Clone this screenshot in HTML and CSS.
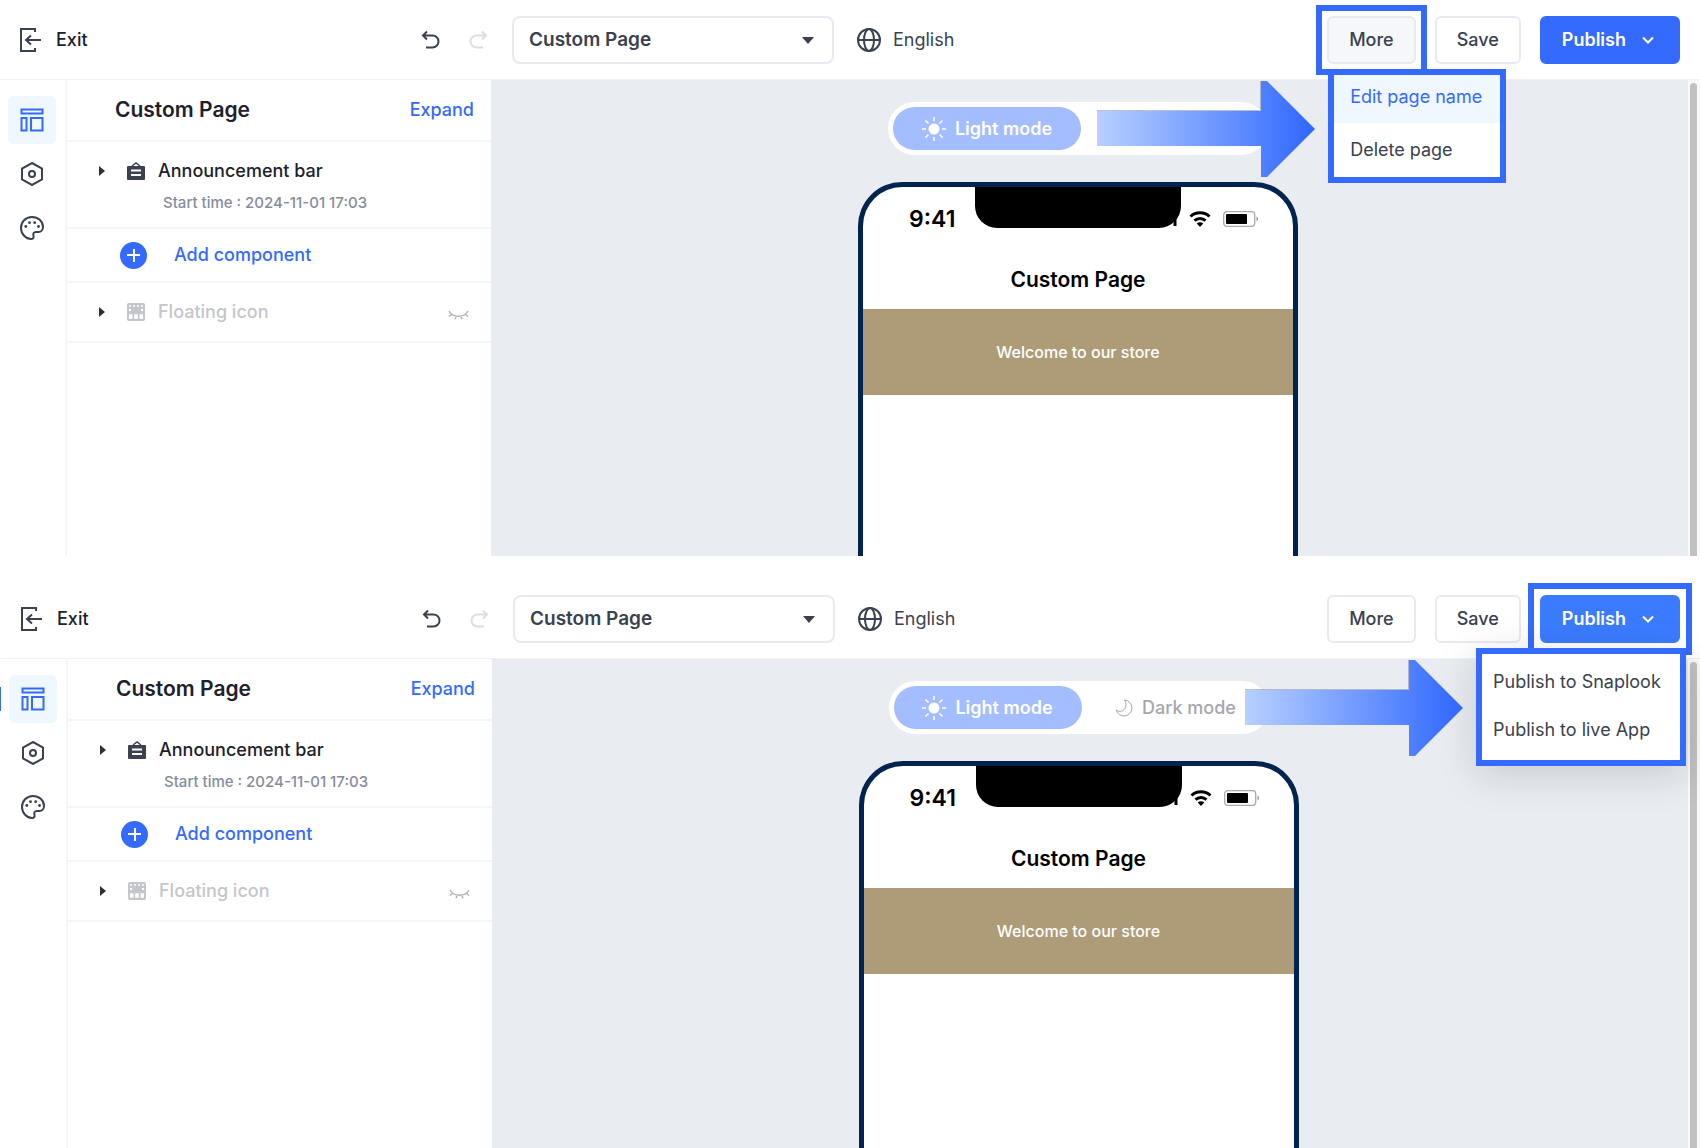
FILE: index.html
```html
<!DOCTYPE html>
<html lang="en">
<head>
    <meta charset="UTF-8">
    <meta name="viewport" content="width=device-width, initial-scale=1.0">
    <title>Custom Page</title>
    <link rel="stylesheet" href="styles.css">
</head>
<body>
    <!-- shared icons -->
    <svg class="sprite" aria-hidden="true">
        <linearGradient id="arrowFill" x1="0" x2="1" y1="0" y2="0">
            <stop offset="0" stop-color="#b8d0ff"/>
            <stop offset="1" stop-color="#2f67ff"/>
        </linearGradient>
        <symbol id="i-exit" viewBox="0 0 22 24"><path d="M15 4V1H1v22h14v-3M21 12H6M11 7.500l-5 4.500 5 4.500"/></symbol>
        <symbol id="i-undo" viewBox="0 0 20 20"><path d="M6 1.500L2 5.500l4 4M2 5.500h9.500a6 6 0 0 1 0 12H5"/></symbol>
        <symbol id="i-globe" viewBox="0 0 24 24"><circle cx="12" cy="12" r="11"/><ellipse cx="12" cy="12" rx="5" ry="11"/><path d="M1 12h22"/></symbol>
        <symbol id="i-down" viewBox="0 0 12 8"><path d="M1 1.500l5 5 5-5"/></symbol>
        <symbol id="i-layout" viewBox="0 0 24 24"><path d="M1.500 1.500h21v4h-21zM1.500 10h5v12.500h-5zM11 10h11.500v12.500H11z"/></symbol>
        <symbol id="i-hex" viewBox="0 0 24 24"><path d="M12 1l10 5.500v11L12 23 2 17.500v-11z"/><circle cx="12" cy="12" r="3"/></symbol>
        <symbol id="i-palette" viewBox="0 0 24 24"><path d="M12 1C5.500 1 1 6 1 12s5 11 10 11c2 0 3-1.500 2.500-3-.8-2.500.3-4 2.500-4h2.500c2.500 0 4.500-2 4.500-5C23 5 18 1 12 1z"/><g fill="currentColor" stroke="none"><circle cx="5.800" cy="10.500" r="1.400"/><circle cx="9.500" cy="6.700" r="1.400"/><circle cx="14.700" cy="6.700" r="1.400"/><circle cx="18.500" cy="10.500" r="1.400"/></g></symbol>
        <symbol id="i-caret" viewBox="0 0 6 10"><path d="M0 0l6 5-6 5z" fill="currentColor" stroke="none"/></symbol>
        <symbol id="i-board" viewBox="0 0 18 18"><path d="M5 4l4-3 4 3" stroke-width="1.500"/><rect y="4" width="18" height="14" rx="1" fill="currentColor" stroke="none"/><path d="M4 8.500h10M4 13h10" stroke="#fff"/></symbol>
        <symbol id="i-grid" viewBox="0 0 18 18"><rect width="18" height="18" rx="2" fill="currentColor" stroke="none"/><path d="M2 3h14" stroke="#fff" stroke-width="1.500" stroke-dasharray="2 2"/><path d="M2 7h2M14 7h2" stroke="#fff" stroke-width="2"/><path d="M2 13.500h3.500M7.200 13.500h3.600M12.500 13.500H16" stroke="#fff" stroke-width="4.500"/></symbol>
        <symbol id="i-eye" viewBox="0 0 21 10"><path d="M1 1c4 7 15 7 19 0M4 4L1 6.500M8.300 6L7 9.200M12.700 6L14 9.200M17 4l3 2.500" stroke-width="1.500"/></symbol>
        <symbol id="i-sun" viewBox="0 0 24 24"><circle cx="12" cy="12" r="5.500" fill="currentColor" stroke="none"/><path d="M12 0v4M12 20v4M0 12h4M20 12h4M3.500 3.500l3 3M17.500 17.500l3 3M3.500 20.500l3-3M17.500 6.500l3-3" stroke-width="1.500"/></symbol>
        <symbol id="i-moon" viewBox="0 0 18 18"><path d="M9.500 1A8 8 0 1 1 1.200 11 5.500 5.500 0 0 0 9.500 10c2-2.500 2-6 0-9z" stroke-width="1"/></symbol>
        <symbol id="i-signal" viewBox="0 0 20 16"><path d="M0 11h3v3H0zM5 8h3v6H5zM10 4h3v9h-3zM16.500 1h3v14h-3z" fill="currentColor" stroke="none"/></symbol>
        <symbol id="i-wifi" viewBox="0 0 22 16"><path d="M1.500 5.500a14 14 0 0 1 19 0M5.500 9.700a8 8 0 0 1 11 0" stroke-width="3"/><path d="M11 16l-3.300-3.400a4.600 4.600 0 0 1 6.600 0z" fill="currentColor" stroke="none"/></symbol>
        <symbol id="i-battery" viewBox="0 0 36 16"><rect x=".7" y=".7" width="31" height="14.600" rx="3" stroke="#aaa" stroke-width="1.300"/><rect x="3" y="3" width="21" height="10" rx="1" fill="currentColor" stroke="none"/><path d="M33.500 5.500c2 .7 2 4.300 0 5z" fill="#999" stroke="none"/></symbol>
        <symbol id="i-arrow" viewBox="0 0 218 96"><path d="M0 30h164V0h6l48 48-48 48h-6V65H0z" fill="url(#arrowFill)" stroke="none"/><path d="M0 29.500h163.500V0" stroke="#8b95ad" stroke-opacity=".6" stroke-width="1"/></symbol>
    </svg>

    <section class="screen">
        <header class="topbar">
            <button class="plain exit"><svg class="icon exit-icon"><use href="#i-exit"/></svg>Exit</button>
            <div class="history">
                <button class="plain" aria-label="Undo"><svg class="icon"><use href="#i-undo"/></svg></button>
                <button class="plain redo" aria-label="Redo" disabled><svg class="icon flip"><use href="#i-undo"/></svg></button>
            </div>
            <div class="page-select">
                <select aria-label="Page"><option>Custom Page</option></select>
            </div>
            <button class="plain lang"><svg class="icon globe"><use href="#i-globe"/></svg>English</button>
            <div class="actions">
                <div class="action marked marked-more">
                    <button class="btn btn-hover">More</button>
                    <div class="menu menu-more">
                        <button class="menu-item selected">Edit page name</button>
                        <button class="menu-item">Delete page</button>
                        <svg class="icon arrow"><use href="#i-arrow"/></svg>
                    </div>
                </div>
                <button class="btn">Save</button>
                <div class="action">
                    <button class="btn btn-primary">Publish<svg class="icon down"><use href="#i-down"/></svg></button>
                </div>
            </div>
        </header>
        <div class="workspace">
            <nav class="rail">
                <button class="plain rail-item active" aria-label="Layout"><svg class="icon"><use href="#i-layout"/></svg></button>
                <button class="plain rail-item" aria-label="Settings"><svg class="icon"><use href="#i-hex"/></svg></button>
                <button class="plain rail-item" aria-label="Theme"><svg class="icon"><use href="#i-palette"/></svg></button>
            </nav>
            <aside class="panel">
                <div class="panel-head">
                    <h2>Custom Page</h2>
                    <button class="plain link">Expand</button>
                </div>
                <div class="component">
                    <div class="component-row">
                        <svg class="icon caret"><use href="#i-caret"/></svg>
                        <svg class="icon kind"><use href="#i-board"/></svg>
                        <span>Announcement bar</span>
                    </div>
                    <p class="start-time">Start time : 2024-11-01 17:03</p>
                </div>
                <button class="plain link add"><span class="plus"></span>Add component</button>
                <div class="component component-row hidden-item">
                    <svg class="icon caret"><use href="#i-caret"/></svg>
                    <svg class="icon kind"><use href="#i-grid"/></svg>
                    <span>Floating icon</span>
                    <svg class="icon eye"><use href="#i-eye"/></svg>
                </div>
            </aside>
            <main class="canvas">
                <div class="modes">
                    <button class="mode mode-on"><svg class="icon sun"><use href="#i-sun"/></svg>Light mode</button>
                </div>
                <div class="phone">
                    <div class="notch"></div>
                    <div class="status">
                        <span class="clock">9:41</span>
                        <svg class="icon signal"><use href="#i-signal"/></svg>
                        <svg class="icon wifi"><use href="#i-wifi"/></svg>
                        <svg class="icon battery"><use href="#i-battery"/></svg>
                    </div>
                    <h3>Custom Page</h3>
                    <p class="announcement">Welcome to our store</p>
                </div>
            </main>
            <div class="scrollbar"></div>
        </div>
    </section>

    <section class="screen">
        <header class="topbar">
            <button class="plain exit"><svg class="icon exit-icon"><use href="#i-exit"/></svg>Exit</button>
            <div class="history">
                <button class="plain" aria-label="Undo"><svg class="icon"><use href="#i-undo"/></svg></button>
                <button class="plain redo" aria-label="Redo" disabled><svg class="icon flip"><use href="#i-undo"/></svg></button>
            </div>
            <div class="page-select">
                <select aria-label="Page"><option>Custom Page</option></select>
            </div>
            <button class="plain lang"><svg class="icon globe"><use href="#i-globe"/></svg>English</button>
            <div class="actions">
                <div class="action">
                    <button class="btn">More</button>
                </div>
                <button class="btn">Save</button>
                <div class="action marked">
                    <button class="btn btn-primary btn-open">Publish<svg class="icon down"><use href="#i-down"/></svg></button>
                    <div class="menu menu-publish">
                        <button class="menu-item">Publish to Snaplook</button>
                        <button class="menu-item">Publish to live App</button>
                        <svg class="icon arrow"><use href="#i-arrow"/></svg>
                    </div>
                </div>
            </div>
        </header>
        <div class="workspace">
            <nav class="rail">
                <button class="plain rail-item active" aria-label="Layout"><svg class="icon"><use href="#i-layout"/></svg></button>
                <button class="plain rail-item" aria-label="Settings"><svg class="icon"><use href="#i-hex"/></svg></button>
                <button class="plain rail-item" aria-label="Theme"><svg class="icon"><use href="#i-palette"/></svg></button>
            </nav>
            <aside class="panel">
                <div class="panel-head">
                    <h2>Custom Page</h2>
                    <button class="plain link">Expand</button>
                </div>
                <div class="component">
                    <div class="component-row">
                        <svg class="icon caret"><use href="#i-caret"/></svg>
                        <svg class="icon kind"><use href="#i-board"/></svg>
                        <span>Announcement bar</span>
                    </div>
                    <p class="start-time">Start time : 2024-11-01 17:03</p>
                </div>
                <button class="plain link add"><span class="plus"></span>Add component</button>
                <div class="component component-row hidden-item">
                    <svg class="icon caret"><use href="#i-caret"/></svg>
                    <svg class="icon kind"><use href="#i-grid"/></svg>
                    <span>Floating icon</span>
                    <svg class="icon eye"><use href="#i-eye"/></svg>
                </div>
            </aside>
            <main class="canvas">
                <div class="modes">
                    <button class="mode mode-on"><svg class="icon sun"><use href="#i-sun"/></svg>Light mode</button>
                    <button class="mode"><svg class="icon moon"><use href="#i-moon"/></svg>Dark mode</button>
                </div>
                <div class="phone">
                    <div class="notch"></div>
                    <div class="status">
                        <span class="clock">9:41</span>
                        <svg class="icon signal"><use href="#i-signal"/></svg>
                        <svg class="icon wifi"><use href="#i-wifi"/></svg>
                        <svg class="icon battery"><use href="#i-battery"/></svg>
                    </div>
                    <h3>Custom Page</h3>
                    <p class="announcement">Welcome to our store</p>
                </div>
            </main>
            <div class="scrollbar"></div>
        </div>
    </section>
</body>
</html>
```
FILE: styles.css
```css
* {
    box-sizing: border-box;
}

body {
    margin: 0;
    height: 100vh;
    display: flex;
    flex-direction: column;
    gap: 23px;
    overflow: hidden;
    background-color: #fff;
    color: #3a414f;
    font-family: 'Inter', 'Liberation Sans', sans-serif;
    font-size: 18px;
    font-weight: 500;
    line-height: 24px;
}

h2, h3, p {
    margin: 0;
}

button, select {
    font: inherit;
    color: inherit;
    cursor: pointer;
}

.sprite {
    position: absolute;
    width: 0;
    height: 0;
}

.icon {
    display: block;
    flex: none;
    width: 24px;
    height: 24px;
    fill: none;
    stroke: currentColor;
    stroke-width: 2;
}

.plain {
    display: flex;
    align-items: center;
    padding: 0;
    border: none;
    background: none;
}

.link {
    color: #356aff;
}

.screen {
    flex: 569 1 0;
    min-height: 0;
    display: flex;
    flex-direction: column;
}

.screen:first-of-type {
    flex-grow: 556;
}

.screen + .screen {
    padding-left: 1px;
}

/* top bar */
.topbar {
    flex: none;
    display: flex;
    align-items: center;
    height: 80px;
    padding: 0 20px;
    border-bottom: 1px solid #f0f1f4;
}

.exit {
    gap: 14px;
    width: 401px;
    color: #1c212b;
}

.exit-icon {
    width: 22px;
    color: #3a414f;
}

.history {
    display: flex;
    gap: 27px;
    width: 91px;
}

.history .icon {
    width: 20px;
    height: 20px;
}

.redo {
    color: #dcdee2;
}

.flip {
    transform: scaleX(-1);
}

.page-select {
    position: relative;
    width: 322px;
}

.page-select::after {
    content: "";
    position: absolute;
    top: 21px;
    right: 20px;
    border: 6px solid transparent;
    border-top: 7px solid #3a414f;
    border-bottom: none;
    pointer-events: none;
}

.page-select select {
    appearance: none;
    display: block;
    width: 100%;
    height: 48px;
    padding: 0 15px;
    border: 2px solid #e9eaef;
    border-radius: 8px;
    background-color: #fff;
    font-size: 19px;
    font-weight: 600;
}

.lang {
    gap: 12px;
    margin-left: 23px;
    font-weight: 400;
}

.actions {
    display: flex;
    gap: 19px;
    margin-left: auto;
}

.action {
    position: relative;
}

.btn {
    display: flex;
    align-items: center;
    height: 48px;
    padding: 0 20px;
    border: 2px solid #e9eaef;
    border-radius: 6px;
    background-color: #fff;
}

.btn-hover {
    background-color: #f6f7fb;
}

.btn-primary {
    gap: 16px;
    padding: 0 24px 0 20px;
    border-color: #356aff;
    background-color: #356aff;
    color: #fff;
    font-weight: 600;
}

.btn-open {
    border-color: #3b7bff;
    background-color: #3b7bff;
}

.down {
    width: 12px;
    height: 8px;
}

/* highlighted action with its open menu */
.marked {
    outline: 6px solid #356aff;
    outline-offset: 6px;
}

.marked-more {
    outline-offset: 5px;
}

.menu {
    position: absolute;
    z-index: 2;
    top: 53px;
    border: 6px solid #356aff;
    background-color: #fff;
    color: #3a414f;
}

.menu-more {
    left: 1px;
    width: 178px;
}

.menu-publish {
    right: -6px;
    width: 210px;
    padding: 4px 0 6px;
    box-shadow: 0 8px 40px rgba(0, 0, 0, 0.15);
}

.menu-item {
    display: block;
    width: 100%;
    height: 54px;
    padding: 0 16px;
    border: none;
    background: none;
    text-align: left;
    white-space: nowrap;
    font-weight: 400;
}

.menu-item.selected {
    height: 48px;
    padding-bottom: 4px;
    background-color: #eff7ff;
    color: #356aff;
}

.menu-publish .menu-item {
    height: 48px;
    padding: 0 11px;
}

.arrow {
    position: absolute;
    top: 6px;
    right: calc(100% + 19px);
    width: 218px;
    height: 96px;
}

/* workspace */
.workspace {
    flex: 1;
    min-height: 0;
    display: flex;
}

.rail {
    display: flex;
    flex-direction: column;
    align-items: center;
    gap: 6px;
    width: 67px;
    padding: 16px 1px 0 0;
    border-right: 2px solid #f5f6f8;
}

.rail-item {
    justify-content: center;
    width: 48px;
    height: 48px;
    border-radius: 6px;
}

.rail-item.active {
    background-color: #eff7ff;
    color: #356aff;
}

.screen + .screen .rail-item.active::before {
    content: "";
    position: absolute;
    left: 0;
    width: 1px;
    height: 24px;
    background-color: #356aff;
}

.panel {
    width: 424px;
    color: #1c212b;
}

.panel-head {
    display: flex;
    align-items: center;
    justify-content: space-between;
    height: 62px;
    padding: 0 17px 0 48px;
    border-bottom: 2px solid #f5f6f8;
}

.panel-head h2 {
    font-size: 21px;
    font-weight: 600;
}

.component {
    height: 87px;
    padding: 17px 0 0 32px;
    border-bottom: 2px solid #f5f6f8;
}

.component-row {
    display: flex;
    align-items: center;
}

.caret {
    width: 6px;
    height: 10px;
    margin-right: 22px;
    color: #2b303b;
}

.kind {
    width: 18px;
    height: 18px;
    margin-right: 13px;
    color: #3a414f;
}

.start-time {
    padding: 8px 0 0 64px;
    color: #868c9c;
    font-size: 15px;
}

.add {
    gap: 27px;
    width: 100%;
    height: 54px;
    padding-left: 53px;
    border-bottom: 2px solid #f5f6f8;
}

.plus {
    width: 27px;
    height: 27px;
    border-radius: 50%;
    background:
        linear-gradient(#fff, #fff) center / 13px 2px no-repeat,
        linear-gradient(#fff, #fff) center / 2px 13px no-repeat,
        #356aff;
}

.hidden-item {
    height: 60px;
    padding: 0 22px 0 32px;
    color: #c4c6cb;
}

.hidden-item .kind {
    color: #c4c6cb;
}

.eye {
    width: 21px;
    height: 10px;
    margin: 6px 0 0 auto;
    color: #b0b3ba;
}

.canvas {
    flex: 1;
    display: flex;
    flex-direction: column;
    align-items: center;
    padding: 22px 23px 0 0;
    background-color: #e9ecf1;
}

.modes {
    flex: none;
    display: flex;
    width: 380px;
    height: 53px;
    margin-bottom: 27px;
    padding: 5px;
    border-radius: 27px;
    background-color: #fff;
}

.mode {
    flex: none;
    display: flex;
    align-items: center;
    justify-content: center;
    gap: 9px;
    width: 188px;
    padding: 0;
    border: none;
    border-radius: 22px;
    background: none;
    color: #a5a7ad;
}

.mode-on {
    background-color: #a3bdff;
    color: #fff;
    font-weight: 600;
}

.moon {
    width: 18px;
    height: 18px;
}

.phone {
    flex: 1;
    min-height: 0;
    position: relative;
    width: 440px;
    border: 5px solid #002450;
    border-bottom: none;
    border-radius: 44px 44px 0 0;
    background-color: #fff;
    color: #000;
    text-align: center;
}

.notch {
    position: absolute;
    z-index: 1;
    top: 0;
    left: 112px;
    width: 206px;
    height: 41px;
    border-radius: 0 0 22px 22px;
    background-color: #000;
}

.status {
    display: flex;
    align-items: center;
    gap: 12px;
    height: 64px;
    padding: 0 34px 0 46px;
}

.clock {
    margin-right: auto;
    font-size: 23px;
    font-weight: 600;
}

.signal {
    width: 20px;
    height: 16px;
}

.wifi {
    width: 22px;
    height: 16px;
}

.battery {
    width: 36px;
    height: 16px;
}

.phone h3 {
    font-size: 21px;
    font-weight: 600;
    line-height: 58px;
}

.announcement {
    background-color: #ae9c78;
    color: #fff;
    font-size: 16px;
    line-height: 86px;
}

.scrollbar {
    width: 12px;
    padding: 3px 3px 0 2px;
    background-color: #fafafa;
}

.scrollbar::before {
    content: "";
    display: block;
    height: 100%;
    border-radius: 4px 4px 0 0;
    background-color: #c1c1c1;
}
```
